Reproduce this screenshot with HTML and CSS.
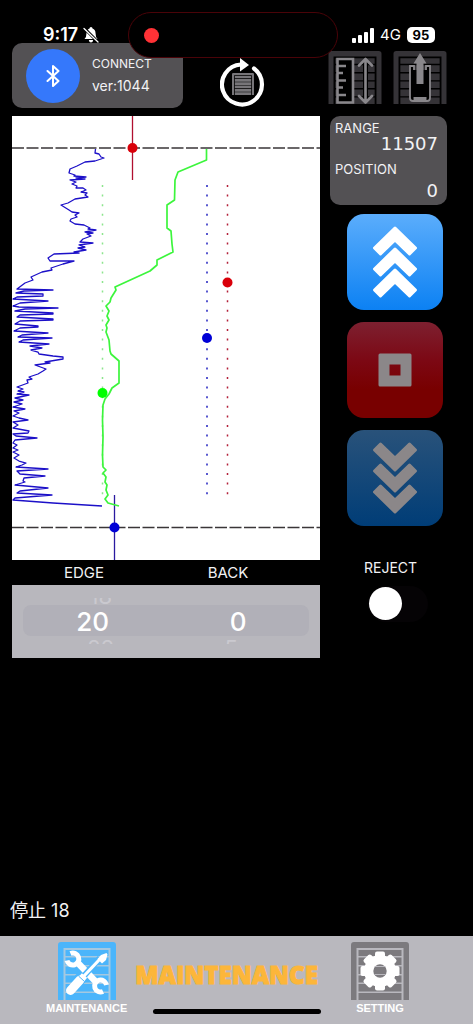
FILE: index.html
```
<!DOCTYPE html>
<html lang="ja">
<head>
<meta charset="utf-8">
<meta name="viewport" content="width=device-width, initial-scale=1">
<title>Maintenance</title>
<link rel="stylesheet" href="styles.css">
</head>
<body>
<svg class="defs" aria-hidden="true">
  <symbol id="shutter" viewBox="0 0 58 58">
    <path d="M0 58V3Q0 0 3 0H55Q58 0 58 3V58H52.500V6H5.500V58Z"/>
    <path d="M7.500 8H50.500V14H7.500ZM7.500 15.500H50.500V23H7.500ZM7.500 24.500H50.500V32H7.500ZM7.500 33.500H50.500V40.500H7.500ZM7.500 42H50.500V49.500H7.500ZM7.500 51H50.500V58H7.500Z"/>
  </symbol>
  <symbol id="chevrons" viewBox="0 0 96 96">
    <g fill="currentColor" stroke="currentColor" stroke-width="3" stroke-linejoin="round">
      <path d="M48 14 68.500 34 62.500 40 48 26 33.500 40 27.500 34Z"/>
      <path d="M48 35 68.500 55 62.500 61 48 47 33.500 61 27.500 55Z"/>
      <path d="M48 56 68.500 76 62.500 82 48 68 33.500 82 27.500 76Z"/>
    </g>
  </symbol>
</svg>

<header class="status">
  <div class="status-left">
    <time class="clock">9:17</time>
    <svg class="bell" viewBox="0 0 16 16" aria-label="Silent">
      <path fill="#fff" d="M8 0Q9.500 0 9.500 1.500Q12.500 2.500 12.500 6Q12.500 10 14.500 12H1.500Q3.500 10 3.500 6Q3.500 2.500 6.500 1.500Q6.500 0 8 0ZM5.800 13H10.200Q9.800 15.500 8 15.500T5.800 13Z"/>
      <path stroke="#000" stroke-width="3" d="M1 1 15 15"/>
      <path stroke="#fff" stroke-width="1.300" stroke-linecap="round" d="M1 1.500 15 15"/>
    </svg>
  </div>
  <div class="status-right">
    <svg class="signal" viewBox="0 0 23 15" fill="#fff" aria-label="Signal">
      <rect x="0" y="10" width="4" height="5" rx="1"/><rect x="6" y="7" width="4" height="8" rx="1"/><rect x="12" y="4" width="4" height="11" rx="1"/><rect x="18" y="0" width="4" height="15" rx="1"/>
    </svg>
    <span class="network">4G</span>
    <span class="battery">95</span>
  </div>
  <div class="island"><span class="rec"></span></div>
</header>

<div class="toolbar">
  <button class="connect" type="button">
    <span class="bt">
      <svg viewBox="0 0 14 22" fill="none" stroke="#fff" stroke-width="2" stroke-linejoin="round" stroke-linecap="round"><path d="M1.500 6 12.500 16 7 21V1L12.500 6 1.500 16"/></svg>
    </span>
    <span class="connect-text"><span>CONNECT</span><span class="version">ver:1044</span></span>
  </button>
  <button class="tool reload" type="button" aria-label="Reload">
    <svg viewBox="0 0 46 50">
      <path d="M34 10.500A20 20 0 1 1 21 6.500" fill="none" stroke="#fff" stroke-width="4.200" stroke-linecap="round"/>
      <path d="M20 0 29 7 20 13.500Z" fill="#fff"/>
      <use href="#shutter" x="12" y="15" width="22" height="22" fill="#777579"/>
    </svg>
  </button>
  <div class="tool-pair">
    <button class="tool" type="button" aria-label="Measure">
      <svg viewBox="0 0 54 53">
        <use href="#shutter" width="54" height="53" preserveAspectRatio="none" fill="#353337"/>
        <g stroke="#89878b" stroke-width="2.600" fill="none">
          <path fill="#000" d="M9.500 8H25V51.500H9.500Z"/>
          <path d="M10 15H18M10 22H15M10 29.500H18M10 36.500H15M10 44H18"/>
          <path stroke="#000" stroke-width="5" d="M37.500 9V51"/>
          <path stroke-linecap="round" stroke-linejoin="round" d="M37.500 8V51M31 14.500 37.500 8 44 14.500M31 45 37.500 51.500 44 45"/>
        </g>
      </svg>
    </button>
    <button class="tool" type="button" aria-label="Raise">
      <svg viewBox="0 0 54 53">
        <use href="#shutter" width="54" height="53" preserveAspectRatio="none" fill="#353337"/>
        <path fill="#000" stroke="#89878b" stroke-width="1.800" d="M21 19V15H17V47Q17 50 20 50H34Q37 50 37 47V15H33V19"/>
        <path fill="#89878b" d="M20.500 46H33.500V50H20.500Z"/>
        <path fill="#89878b" d="M27 2 33.500 12.500H30.500V33H23.500V12.500H20.500Z"/>
      </svg>
    </button>
  </div>
</div>

<main class="panel">
  <section class="left">
    <svg class="chart" viewBox="12 116 308 444" role="img" aria-label="Shutter travel chart">
      <path class="guide" d="M12 148H320M12 527.500H320"/>
      <g class="dots">
        <path stroke="#8de58d" d="M102.500 185V496"/>
        <path stroke="#2222c0" d="M207 185V496"/>
        <path stroke="#b3203a" d="M227.500 185V496"/>
      </g>
      <path stroke="#b01030" stroke-width="1.300" d="M132.500 116V180"/>
      <path stroke="#2a1aa0" stroke-width="1.300" d="M114.500 495V560"/>
      <polyline class="trace blue" points="95.500,149 95,153 99,154 101,157 104,158 95,161 85,162 77,166 70,169 69,173 75,175 74,176 86,177 76,178 85,179 70,180 76,182 72,184 77,186 76,188 83,188 86,190 81,192 87,193 85,195 88,197 75,199 68,203 61,205 69,210 72,212 79,213 75,215 77,217 71,219 70,221 75,224 84,225 90,228 88,229 96,230 85,232 93,233 87,234 91,236 83,239 80,242 93,243 79,245 85,247 78,248 86,250 74,252 79,253 54,254 48,258 50,261 74,261 63,264 51,268 52,270 42,272 31,277 33,280 25,283 17,289 53,290 24,291 16,293 43,294 43,296 17,297 13,299 48,301 20,303 13,306 19,307 58,308 25,309 15,311 53,313 53,314 20,315 17,317 53,319 53,320 20,321 15,324 38,326 38,327 20,328 14,331 48,333 22,335 18,337 52,338 23,340 19,342 49,344 30,346 42,348 31,350 38,352 39,354 53,356 63,357 63,359 45,362 50,363 35,365 46,369 43,371 38,374 29,377 32,379 27,380 28,383 17,387 23,389 18,391 24,392 17,394 29,395 15,398 23,400 14,402 22,404 13,407 25,409 14,411 19,413 13,416 19,418 28,420 13,422 18,425 13,428 29,431 28,433 13,434 16,436 37,438 15,440 13,443 17,445 13,448 18,450 13,452 19,455 14,458 19,461 26,463 22,465 16,467 48,469 17,471 20,474 45,476 24,478 23,481 25,482 15,485 48,488 20,491 17,493 52,495 15,498 13,500 53,503 102,506"/>
      <polyline class="trace green" points="206.500,149 206.500,160 178,172 175,180 174.500,200 167,205 167,228 171,231 172,244 173,252 157,260 157,265 150,271 115,287 116,290 111,298 110,302 106,306 109,311 107,316 109,320 106,325 107,328 106,332 109,340 110,351 111,354 119,361 119,383 112,388 109,394 105,399 103,405 102.500,420 103,437 102.500,455 103,467 106,470 103,473 106,477 105,482 107,485 106,490 108,495 105,499 108,503 119,506"/>
      <g fill="#d9000a"><circle cx="132.500" cy="148" r="5"/><circle cx="227.500" cy="282.500" r="5"/></g>
      <g fill="#0000d6"><circle cx="207" cy="338" r="5"/><circle cx="114.500" cy="527.500" r="5"/></g>
      <circle cx="102.500" cy="393" r="5" fill="#0f0"/>
    </svg>
    <div class="wheel-labels"><span id="edge">EDGE</span><span id="back">BACK</span></div>
    <div class="picker">
      <div class="wheel" role="group" aria-labelledby="edge">
        <div class="ghost above"><span>18</span></div>
        <div class="value">20</div>
        <div class="ghost below"><span>22</span></div>
      </div>
      <div class="wheel" role="group" aria-labelledby="back">
        <div class="ghost above"></div>
        <div class="value">0</div>
        <div class="ghost below start"><span>5</span></div>
      </div>
    </div>
  </section>

  <section class="right">
    <dl class="readout">
      <dt>RANGE</dt><dd>11507</dd>
      <dt class="second">POSITION</dt><dd class="last">0</dd>
    </dl>
    <div class="controls">
      <button class="move up" type="button" aria-label="Up"><svg viewBox="0 0 96 96"><use href="#chevrons"/></svg></button>
      <button class="move stop" type="button" aria-label="Stop"><svg viewBox="0 0 96 96"><path fill="currentColor" fill-rule="evenodd" d="M33 31.500H63Q64.500 31.500 64.500 33V63Q64.500 64.500 63 64.500H33Q31.500 64.500 31.500 63V33Q31.500 31.500 33 31.500ZM42.500 42.500V53.500H53.500V42.500Z"/></svg></button>
      <button class="move down" type="button" aria-label="Down"><svg viewBox="0 0 96 96"><use href="#chevrons" transform="rotate(180 48 48)"/></svg></button>
    </div>
    <div class="reject">
      <label for="reject">REJECT</label>
      <input id="reject" class="switch" type="checkbox">
    </div>
  </section>
</main>

<p class="message">停止 18</p>

<nav class="tabs">
  <a class="tab" href="#maintenance">
    <svg viewBox="0 0 58 58">
      <path d="M5 6H53V58H5Z" fill="#a5c8e0"/>
      <use href="#shutter" width="58" height="58" fill="#4bb5fb"/>
      <g fill="none" stroke="#fff">
        <path stroke-width="6.500" d="M19 20 39 41"/>
        <path stroke-width="5" d="M12.500 11.500A6 6 0 1 1 9 18.500"/>
        <path stroke-width="5" d="M45 49.500A6 6 0 1 1 48.500 43"/>
        <path stroke="#4bb5fb" stroke-width="6" d="M42 16 25 35"/>
        <path stroke-width="3.200" d="M42 17 25 35"/>
        <path stroke="#4bb5fb" stroke-width="12" d="M25 34 21 38"/>
        <path stroke-width="9" stroke-linecap="round" d="M22 38 12.500 48.500"/>
        <path stroke-width="7" d="M26.500 33.500 23.500 37"/>
        <path stroke="#4bb5fb" stroke-width="1" d="M20.500 34 26.500 39.500"/>
      </g>
      <path fill="#fff" d="M39.500 17 43 13 48.500 11 49.500 12.500 48 18 44 21.500Z"/>
    </svg>
    <span>MAINTENANCE</span>
  </a>
  <h1 class="title">MAINTENANCE</h1>
  <a class="tab" href="#setting">
    <svg viewBox="0 0 58 58">
      <path d="M5 6H53V58H5Z" fill="#b9b8be"/>
      <use href="#shutter" width="58" height="58" fill="#7c7a7e"/>
      <g fill="#fff">
        <rect x="24" y="9.500" width="10" height="39" rx="2"/>
        <rect x="24" y="9.500" width="10" height="39" rx="2" transform="rotate(45 29 29)"/>
        <rect x="24" y="9.500" width="10" height="39" rx="2" transform="rotate(90 29 29)"/>
        <rect x="24" y="9.500" width="10" height="39" rx="2" transform="rotate(135 29 29)"/>
        <circle cx="29" cy="29" r="16"/>
      </g>
      <circle cx="29" cy="29" r="6.700" fill="#7c7a7e"/>
      <path stroke="#b9b8be" stroke-width="1" d="M24 24.500H34M23.500 32.500H34.500"/>
    </svg>
    <span>SETTING</span>
  </a>
  <span class="home-bar"></span>
</nav>
</body>
</html>
```
FILE: styles.css
```
* { box-sizing: border-box; }

body {
  margin: 0;
  min-height: 100vh;
  display: flex;
  flex-direction: column;
  background: #000;
  color: #f2f2f4;
  font-family: Inter, "Noto Sans CJK JP", sans-serif;
}

button {
  border: 0;
  padding: 0;
  background: none;
  color: inherit;
  font: inherit;
}

svg { display: block; }
.defs { position: absolute; width: 0; height: 0; }

/* status bar */
.status {
  position: relative;
  height: 43px;
  padding: 0 38px 0 43px;
  display: flex;
  justify-content: space-between;
  align-items: flex-end;
  color: #fff;
}
.status-left, .status-right { display: flex; align-items: center; height: 16px; }
.status-left { gap: 5px; }
.clock { font-size: 18px; font-weight: 600; line-height: 16px; }
.bell { width: 16px; height: 16px; }
.signal { width: 23px; height: 15px; }
.network { margin: 0 6px 0 5px; font-size: 15px; line-height: 16px; }
.battery {
  width: 28px;
  border-radius: 5px;
  background: #fff;
  color: #000;
  font-size: 13px;
  font-weight: 700;
  line-height: 16px;
  text-align: center;
}
.island {
  position: absolute;
  z-index: 1;
  top: 12px;
  left: 50%;
  width: 210px;
  height: 46px;
  margin-left: -109px;
  padding-left: 15px;
  display: flex;
  align-items: center;
  border: 1px solid #4a0308;
  border-radius: 23px;
  background: #000;
}
.rec { width: 15px; height: 15px; border-radius: 50%; background: #ff3236; }

/* toolbar */
.toolbar {
  display: flex;
  align-items: center;
  padding: 0 26px 0 12px;
}
.connect {
  width: 171px;
  height: 65px;
  padding: 0 14px;
  display: flex;
  align-items: center;
  gap: 12px;
  border-radius: 10px;
  background: #535154;
  text-align: left;
}
.bt {
  width: 54px;
  height: 54px;
  display: grid;
  place-items: center;
  border-radius: 50%;
  background: #3578fb;
}
.bt svg { width: 14px; height: 22px; }
.connect-text { display: grid; padding-bottom: 2px; font-size: 12px; line-height: 22px; }
.version { font-size: 14px; }
.reload { width: 46px; margin-left: 37px; padding-top: 14px; }
.tool-pair { display: flex; gap: 11px; margin-left: auto; padding-top: 4px; }
.tool-pair .tool { width: 54px; }

/* main panel */
.panel {
  display: grid;
  grid-template-columns: 1fr 117px;
  gap: 10px;
  padding: 8px 26px 0 12px;
}
.chart { width: 100%; height: auto; background: #fff; }
.guide { stroke: #3a3638; stroke-width: 1.5; stroke-dasharray: 12 2.5; }
.dots { stroke-width: 1.5; stroke-dasharray: 2 7.6; }
.trace { fill: none; stroke-linejoin: round; }
.blue { stroke: #1c10c8; stroke-width: 1.3; }
.green { stroke: #3cf53c; stroke-width: 1.7; }

.wheel-labels {
  display: grid;
  grid-template-columns: 1fr 1fr;
  padding-right: 20px;
  font-size: 15px;
  line-height: 25px;
  text-align: center;
}
.picker {
  position: relative;
  z-index: 0;
  height: 73px;
  padding: 0 9px 0 8px;
  display: grid;
  grid-template-columns: 1fr 1fr;
  background: #b8b7bd;
}
.picker::before {
  content: "";
  position: absolute;
  z-index: -1;
  inset: 20px 11px 22px;
  border-radius: 8px;
  background: #b1b0b8;
}
.wheel {
  display: grid;
  grid-template-rows: 6px 31px 6px;
  row-gap: 2px;
  align-content: center;
  text-align: center;
}
.value { color: #fff; font-size: 26px; font-weight: 500; line-height: 31px; }
.ghost {
  display: flex;
  justify-content: center;
  overflow: hidden;
  padding-left: 16px;
  color: #cac9cf;
  font-size: 22px;
  line-height: 16px;
}
.above { align-items: flex-end; height: 6px; }
.below { align-items: flex-start; height: 4px; margin-top: 1px; }
.start { padding: 0 14px 0 0; }

/* readout and controls */
.readout {
  height: 89px;
  margin: 0 0 9px;
  padding: 4px 9px 0 5px;
  border-radius: 10px;
  background: #535154;
  font-size: 13px;
  line-height: 16px;
}
.readout dd {
  margin: 0;
  font-family: "DejaVu Sans", sans-serif;
  font-size: 18px;
  text-align: right;
}
.readout .second { margin-top: 9px; }
.readout .last { line-height: 28px; }
.controls { display: grid; gap: 12px; padding-left: 17px; }
.move { width: 96px; height: 96px; border-radius: 17px; }
.up { background: linear-gradient(#5badfc, #0c81f3); color: #fff; }
.stop { background: linear-gradient(#7d2030, #7c0814 40%, #780000 70%); color: #8b8789; }
.down { background: linear-gradient(#29527a, #003d77); color: #8b8789; }
.reject {
  display: grid;
  justify-content: start;
  gap: 8px;
  padding: 32px 0 0 34px;
  font-size: 14px;
  line-height: 20px;
}
.switch {
  appearance: none;
  width: 60px;
  height: 36px;
  margin: 0 0 0 4px;
  padding: 1px;
  border-radius: 18px;
  background: #050305;
}
.switch::before {
  content: "";
  display: block;
  width: 33px;
  height: 33px;
  border-radius: 50%;
  background: #fff;
}
.switch:checked::before { margin-left: 25px; }

.message { margin: auto 10px 13px; font-size: 18px; line-height: 24px; }

/* tab bar */
.tabs {
  position: relative;
  height: 88px;
  padding: 6px 64px 0 46px;
  display: flex;
  background: #b9b8be;
}
.tab {
  display: flex;
  flex-direction: column;
  align-items: center;
  color: #fff;
  font: bold 11px/16px "Liberation Sans", Arial, sans-serif;
  text-decoration: none;
}
.tab svg { width: 58px; height: 58px; }
.title {
  flex: 1;
  margin: 0 0 0 8px;
  color: #fcb63a;
  font: 800 24px/66px "Open Sans", sans-serif;
  -webkit-text-stroke: 1px #fcb63a;
}
.home-bar {
  position: absolute;
  bottom: 10px;
  left: 50%;
  width: 168px;
  height: 5px;
  margin-left: -84px;
  border-radius: 3px;
  background: #000;
}
```
